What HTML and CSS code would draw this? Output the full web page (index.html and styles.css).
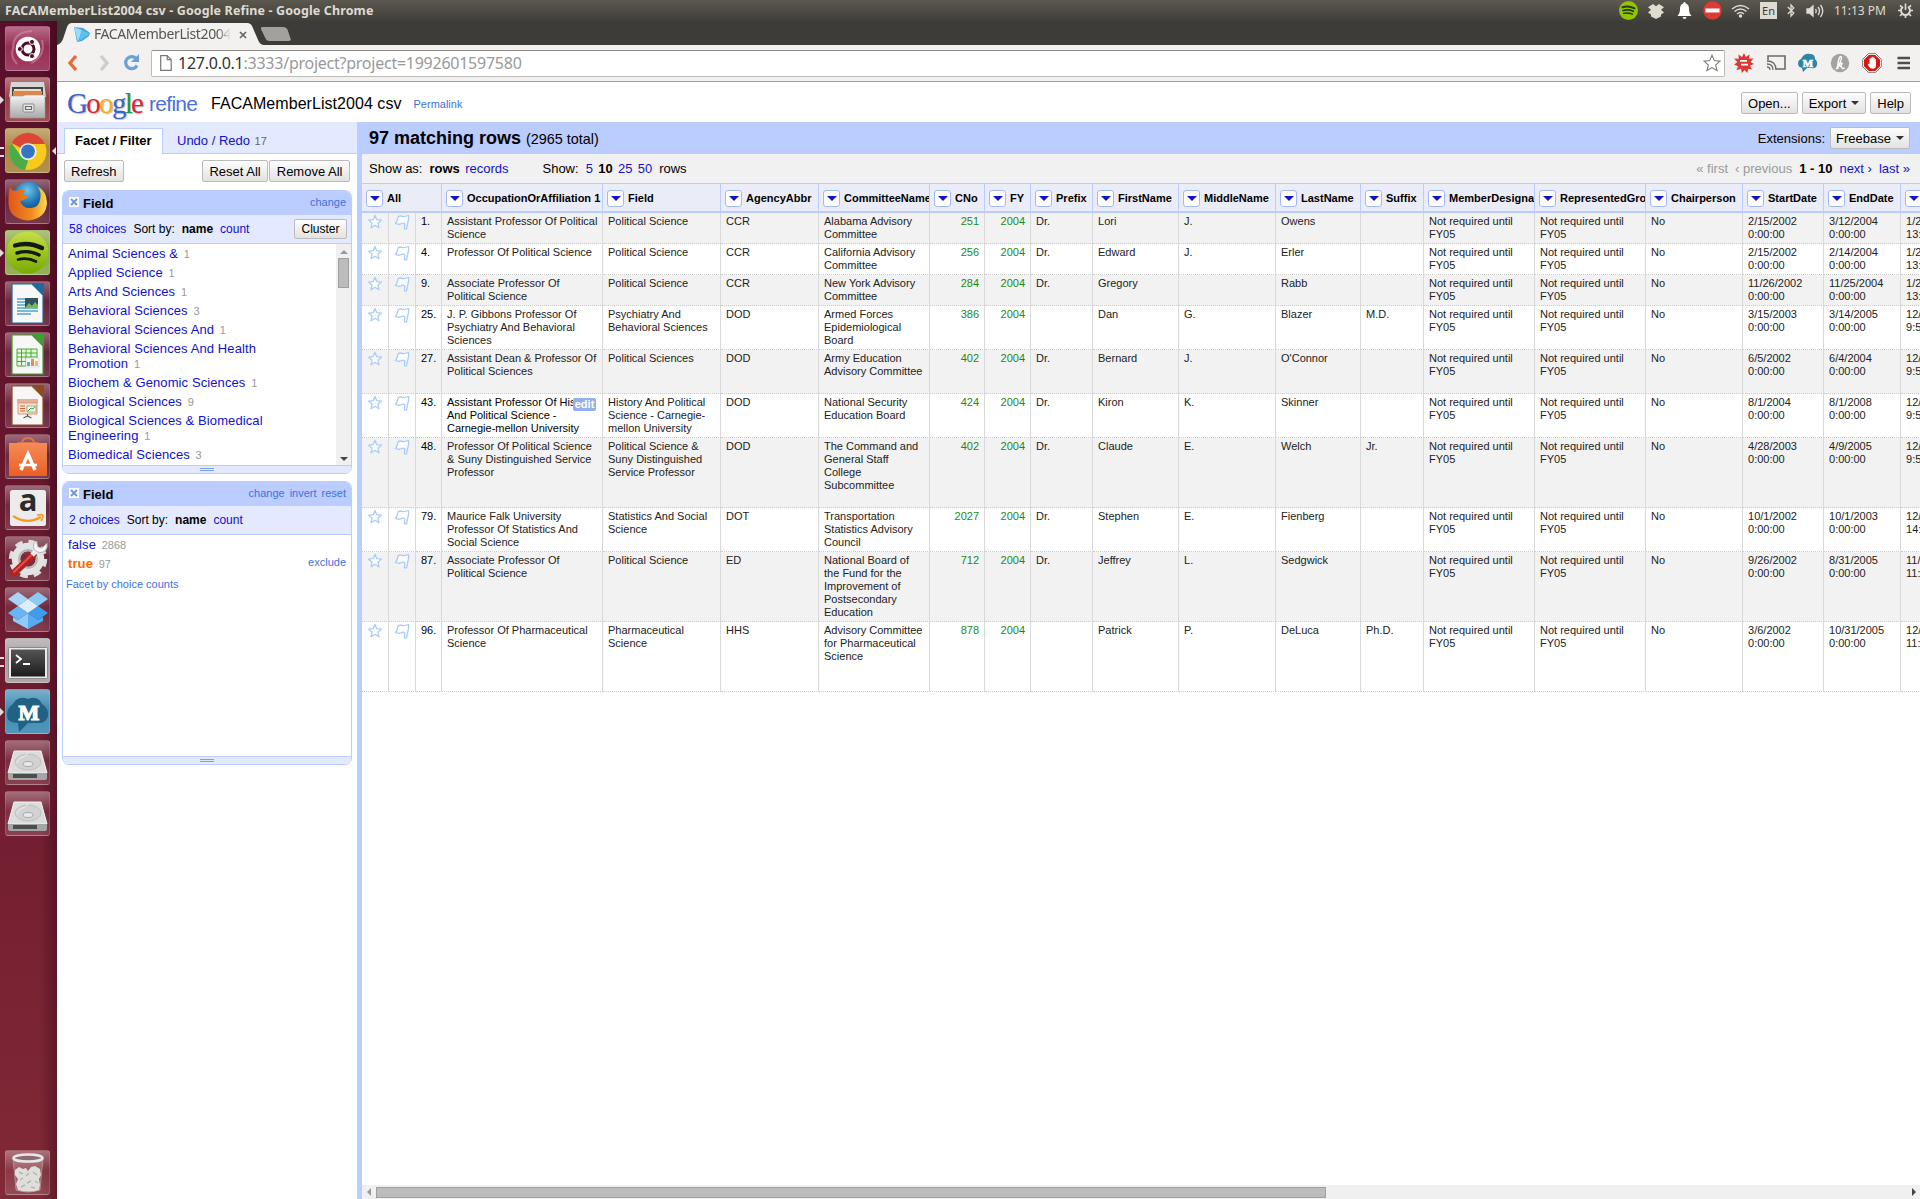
FILE: index.html
```html
<!DOCTYPE html>
<html lang="en">
<head>
<meta charset="utf-8">
<title>FACAMemberList2004 csv - Google Refine</title>
<link rel="stylesheet" href="styles.css">
</head>
<body>
<svg class="defs" width="0" height="0">
  <defs>
    <linearGradient id="gl" x1="0" y1="0" x2="0" y2="1"><stop offset="0" stop-color="#f4f4f4"/><stop offset="1" stop-color="#a9a9a9"/></linearGradient>
    <linearGradient id="dk" x1="0" y1="0" x2="0" y2="1"><stop offset="0" stop-color="#555"/><stop offset="1" stop-color="#1c1c1c"/></linearGradient>
    <linearGradient id="sp" x1="0" y1="0" x2="0" y2="1"><stop offset="0" stop-color="#c5de48"/><stop offset="1" stop-color="#76ab00"/></linearGradient>
    <linearGradient id="or" x1="0" y1="0" x2="0" y2="1"><stop offset="0" stop-color="#f58b56"/><stop offset="1" stop-color="#ea5f26"/></linearGradient>
    <radialGradient id="fb" cx=".45" cy=".25" r=".8"><stop offset="0" stop-color="#6cc8ee"/><stop offset=".5" stop-color="#1d6fae"/><stop offset="1" stop-color="#0b2a5c"/></radialGradient>
    <linearGradient id="fo" x1="0" y1="0" x2="1" y2="0"><stop offset="0" stop-color="#e0561c"/><stop offset=".6" stop-color="#f08a1e"/><stop offset="1" stop-color="#fbdc52"/></linearGradient>
  </defs>
  <symbol id="star" viewBox="0 0 16 16"><path d="M8 1.400l1.800 4.300 4.700.4-3.600 3.100 1.100 4.600L8 11.300l-4 2.500 1.100-4.600L1.500 6.100l4.700-.4z" fill="#fff" stroke="#a9ccfa" stroke-width="1.300" stroke-linejoin="round"/></symbol>
  <symbol id="flag" viewBox="0 0 16 16"><path d="M4 3Q6 1.500 8 2.300T14.500 1.500L14.700 4.500 12.500 14.800H10.500L10.800 9.800Q9 8.500 7 9.700T1.300 9.500L2.800 7.500z" fill="#fff" fill-opacity=".7" stroke="#a9ccfa" stroke-width="1.300" stroke-linejoin="round"/></symbol>
  <symbol id="doc" viewBox="0 0 45 45"><path d="M7 3h20l11 11v28H7z" fill="#f7f7f7" stroke="currentColor" stroke-width="1.200"/><path d="M27 2h12v12z" fill="currentColor"/></symbol>
  <symbol id="disk" viewBox="0 0 45 45"><path d="M9 11h27l6 22H3z" fill="#dcdcdc" stroke="#f2f2f2"/><ellipse cx="23" cy="22" rx="13" ry="8" fill="#d2d2d2" stroke="#c0c0c0"/><ellipse cx="23" cy="24" rx="5" ry="2.500" fill="#e8e8e8" stroke="#aaa"/><path d="M12 23c1-7 10-5 11-11" fill="none" stroke="#eee"/><path d="M3 33h39v5q0 2-2 2H5q-2 0-2-2z" fill="#a5a5a5"/><path d="M8 34h24v4H8z" fill="#4b4f4c"/></symbol>
</svg>

<div class="desktop">
  <header class="panel">
    <span class="panel-title">FACAMemberList2004 csv - Google Refine - Google Chrome</span>
    <div class="tray">
      <svg width="19" height="19" viewBox="0 0 19 19"><circle cx="9.500" cy="9.500" r="9.500" fill="#8ec400"/><g fill="none" stroke="#26380a" stroke-linecap="round"><path d="M3.500 6.300q6-1.800 12 1" stroke-width="2"/><path d="M4 9.500q5.500-1.500 10.300.8" stroke-width="1.700"/><path d="M4.600 12.400q4.500-1 8.700.8" stroke-width="1.400"/></g></svg>
      <svg class="g10" width="16" height="16" viewBox="0 0 16 16" fill="#dfdbd2"><path d="M5 1l3 2.300L11 1l5 3.200-3 2.600 3 2.700-3 1.900v2L8 16l-5-2.600v-2L0 9.500l3-2.700-3-2.600z"/></svg>
      <svg class="g13" width="15" height="17" viewBox="0 0 15 17" fill="#fff"><path d="M7.500 0q1.300 0 1.300 1.500 3.200 1 3.200 5 0 5 2.500 7.500H.5Q3 11.500 3 6.500q0-4 3.200-5Q6.200 0 7.500 0zM5.500 15h4q-.5 2-2 2t-2-2z"/></svg>
      <svg class="g11" width="19" height="19" viewBox="0 0 19 19"><circle cx="9.500" cy="9.500" r="9.200" fill="#dc3b35"/><path d="M2.500 7.500h14v4h-14z" fill="#fff"/></svg>
      <svg class="g9" width="19" height="14" viewBox="0 0 19 14" fill="none" stroke="#dfdbd2" stroke-width="1.500"><path d="M1 5q8.500-7 17 0M3.500 7.500q6-5 12 0M6 10q3.500-3 7 0"/><circle cx="9.500" cy="12" r="1" fill="#dfdbd2"/></svg>
      <span class="lang">En</span>
      <svg class="g10" width="8" height="15" viewBox="0 0 8 15" fill="none" stroke="#dfdbd2" stroke-width="1.300"><path d="M.8 4l6 6L4 13V2l2.800 3-6 6"/></svg>
      <svg class="g11" width="18" height="14" viewBox="0 0 18 14" fill="none" stroke="#dfdbd2" stroke-width="1.300"><path d="M1 5h2.500L7 2v10L3.500 9H1z" fill="#dfdbd2"/><path d="M9.500 5q1.500 2 0 4M12 3q3 4 0 8M14.500 1q4.500 6 0 12"/></svg>
      <span class="clock">11:13 PM</span>
      <svg class="g12" width="15" height="15" viewBox="0 0 15 15" fill="none" stroke="#dfdbd2"><path d="M5 3.800a4.500 4.500 0 1 0 5 0" stroke-width="2"/><path d="M7.500.500v6.500" stroke-width="1.600"/><path d="M0 7.500h2.500M12.500 7.500H15M7.500 12.500V15M2 13l2-2M13 13l-2-2M2 2.300l1.700 1.700M13 2.300L11.300 4" stroke-width="1.700"/></svg>
    </div>
  </header>

  <nav class="launcher">
    <div class="tile t-ubuntu"><svg viewBox="0 0 45 45"><path d="M8 22Q8 6 27 5M37 14q4 16-11 23M12 38q-8-8-3-18" fill="none" stroke="#d79ab0" stroke-width="2" opacity=".5"/><circle cx="23" cy="23" r="12.300" fill="#fff"/><circle cx="23" cy="23" r="6" fill="none" stroke="#4d0a28" stroke-width="3"/><g fill="#4d0a28" stroke="#fff" stroke-width="1"><circle cx="14.800" cy="23" r="2.500"/><circle cx="27" cy="15.900" r="2.500"/><circle cx="27" cy="30.100" r="2.500"/></g></svg></div>
    <div class="tile t-files run"><svg viewBox="0 0 45 45"><path d="M6 5h33l2 15H4z" fill="#d6d6d4"/><path d="M7 10h31v10H7z" fill="#484440"/><path d="M9 12h27v2H9z" fill="#e9dccb"/><path d="M8 14h29v6H8z" fill="#e58345"/><path d="M5 19h13l2-1h20v23H5z" fill="url(#gl)" stroke="#989898" stroke-width=".6"/><rect x="18" y="27" width="11" height="8" rx="1" fill="#e8e8e8" stroke="#8a8a8a"/><path d="M20.500 29.500h6v3h-6z" fill="none" stroke="#6a6a6a" stroke-width="1.200"/></svg></div>
    <div class="tile t-chrome run2 active"><svg viewBox="0 0 45 45"><circle cx="23" cy="23.500" r="18.500" fill="#f8ca1b"/><path d="M23 23.500L6.500 15a18.500 18.500 0 0 1 33.500 1H23z" fill="#dc4636"/><path d="M6.500 15L16 28l7 5-3 9A18.500 18.500 0 0 1 6.500 15z" fill="#4aac49"/><circle cx="23" cy="23.500" r="8.600" fill="#f1f1ee"/><circle cx="23" cy="23.500" r="6.900" fill="#3475c4"/></svg></div>
    <div class="tile"><svg viewBox="0 0 45 45"><circle cx="24" cy="20" r="17" fill="url(#fb)"/><path d="M5 8q2 4 6 4 5-3 10 0-4 1-3 4 5 0 4 3-5 3-7 3 3 8 11 7 8-1 9-8 2-8-3-14 10 5 10 17-1 16-19 17.500Q4 40 3.500 24 3.300 14 5 8z" fill="url(#fo)"/></svg></div>
    <div class="tile t-spotify run"><svg viewBox="0 0 45 45"><circle cx="22.500" cy="22.500" r="21" fill="url(#sp)"/><g fill="none" stroke="#15190b" stroke-linecap="round"><path d="M10 15.500q14-4 27 2.500" stroke-width="4.400"/><path d="M12 23q12-3.500 22 2" stroke-width="3.400"/><path d="M13 29.500q10-2.500 18 2" stroke-width="2.700"/></g></svg></div>
    <div class="tile c-writer"><svg viewBox="0 0 45 45"><use href="#doc"/><path d="M12 18h21M12 21h21M12 24h21M12 27h21M12 30h21M12 33h14" stroke="#4da5d0" stroke-width="1.500"/><path d="M20 17h13v10H20z" fill="#2f5362"/><path d="M20 27l4-5 3 3 3-4 3 3v3z" fill="#7db84e"/></svg></div>
    <div class="tile c-calc"><svg viewBox="0 0 45 45"><use href="#doc"/><path d="M12 17h20v17H12z" fill="#e9f7e1" stroke="#43b02a"/><path d="M12 21h20M12 25h20M12 29.500h20M16.500 17v17M21 17v17M26 17v17" stroke="#43b02a"/><path d="M21 26h13v9H21z" fill="#f5f5f5" stroke="#ccc" stroke-width=".5"/><path d="M22 30h3v4h-3z" fill="#5aa9dc"/><path d="M26 27h3v7h-3z" fill="#e98d45"/><path d="M30 29h3v5h-3z" fill="#f0b38a"/></svg></div>
    <div class="tile c-impress"><svg viewBox="0 0 45 45"><use href="#doc"/><path d="M12 17h21M12 19h21" stroke="#d06b3d" stroke-width="1.200"/><path d="M13 20h19v11H13z" fill="#fbe5da" stroke="#dd946f"/><path d="M15 23h5M15 25.500h5M15 28h5" stroke="#c85b2e"/><path d="M22 23h9v6h-9z" fill="#fff" stroke="#6aa84f" stroke-width=".8"/><path d="M23 28l3-3 2 1 2-2.500" fill="none" stroke="#3e9c35"/><path d="M22.500 31v2l-4 2M22.500 33l4 2" fill="none" stroke="#555" stroke-width="1.200"/></svg></div>
    <div class="tile"><svg viewBox="0 0 45 45"><path d="M17 10q0-6 6-6t6 6v3M13.500 13V9h19v4" fill="none" stroke="#d87550" stroke-width="2"/><path d="M4 9h38v33H4z" fill="url(#or)"/><path d="M16 36l7-16 7 16" fill="none" stroke="#fff" stroke-width="3.500"/><path d="M14 31h18" stroke="#fff" stroke-width="2.500"/></svg></div>
    <div class="tile"><svg viewBox="0 0 45 45"><rect x="5" y="5" width="36" height="36" rx="2.500" class="amz"/><text x="23" y="26" class="amz-a" text-anchor="middle">a</text><path d="M8 31q14 9 28 1" fill="none" stroke="#f79a1e" stroke-width="2.200"/><path d="M32 30.500q6-2 6 .5 0 3-2 5" fill="none" stroke="#f79a1e" stroke-width="1.700"/></svg></div>
    <div class="tile"><svg viewBox="0 0 45 45"><circle cx="23" cy="23" r="17" fill="none" stroke="#dedede" stroke-width="4.500" stroke-dasharray="7.500 5.850"/><circle cx="23" cy="23" r="12" fill="none" stroke="#e3e3e3" stroke-width="8.500"/><circle cx="23" cy="23" r="9" fill="none" stroke="#b4b4b4" stroke-width="2"/><path d="M9 37L28 19" stroke="#b51f1d" stroke-width="7" stroke-linecap="round"/><path d="M9 36L26 19.500" stroke="#e0504a" stroke-width="2" stroke-linecap="round"/><path d="M27 19l5-5" stroke="#ececec" stroke-width="5"/><path d="M32 5q-5 2-3 8 5 6 11 2 3-3 2-8l-5 5-4-1-1-4z" fill="#f4f4f4" stroke="#a8a8a8" stroke-width=".8"/></svg></div>
    <div class="tile"><svg viewBox="0 0 45 45"><path d="M13 5l10 7-10 7-10-7z" fill="#a5d5fa"/><path d="M33 5l10 7-10 7-10-7z" fill="#8cc8f8"/><path d="M3 26l10-7 10 7-10 7z" fill="#69b5f3"/><path d="M43 26l-10-7-10 7 10 7z" fill="#3d9ceb"/><path d="M13 19l10-7 10 7-10 7z" fill="#daf0ff"/><path d="M8 30l5 3 10-7v16L8 34z" fill="#8fcaf8"/><path d="M38 30l-5 3-10-7v16l15-8z" fill="#56aaf0"/></svg></div>
    <div class="tile t-term run2"><svg viewBox="0 0 45 45"><rect x="3.500" y="9.500" width="39" height="31" rx="1" fill="#e9e9e9" stroke="#8c8888"/><path d="M6 11.500h34v27H6z" fill="url(#dk)"/><path d="M11 17l5 4-5 4M18 26h7" fill="none" stroke="#fff" stroke-width="1.800"/></svg></div>
    <div class="tile t-menu run"><svg viewBox="0 0 45 45"><path d="M8 15q5-9 15-5 10-4 14 5 7 4 6 12-2 8-11 7H23l-9 9-1-9Q2 34 2 26q0-7 6-11z" fill="#216184"/><text x="24" y="31" class="m-letter" text-anchor="middle">M</text></svg></div>
    <div class="tile"><svg viewBox="0 0 45 45"><use href="#disk"/></svg></div>
    <div class="tile"><svg viewBox="0 0 45 45"><use href="#disk"/></svg></div>
    <div class="tile trash"><svg viewBox="0 0 45 45"><path d="M8 8h30l-3 32q-12 4-24 0z" fill="#fff" fill-opacity=".18" stroke="#ddd" stroke-opacity=".4"/><path d="M10 20l4-3 4 2 3-1 2 3 3-4 4-1 5 3 1 6-2 4 1 6-1 5q-10 3-21 0l-2-6 2-5-3-4z" fill="#dededb"/><path d="M14 22l4 2M21 26l3-3M28 22l4 3M15 30l3-2M22 33l4-2M30 31l3 2M16 37l4-2M26 37l4 1" fill="none" stroke="#b5b5b1" stroke-width="1.500"/><ellipse cx="23" cy="8" rx="14.500" ry="3.600" fill="#8e6b72" stroke="#e6e8e5" stroke-width="2.500"/></svg></div>
  </nav>

  <main class="browser">
    <div class="tabstrip">
      <svg class="tab-shape" width="300" height="24" viewBox="0 0 300 24"><path d="M0 24Q4 23 6 18L10 6q1.500-4 5-4h175q4 0 5.500 4l6 14q2 4 5.500 4z" fill="#f2f1f0"/><path d="M204 8q-.6-2 1.500-2h21q3 0 4 2.500l3 9q1 2.500-2 2.500h-19q-3 0-4-2.500z" fill="#a3a19d"/><path d="M17 6l9 1 7 5-1 3-7 5-5 1z" fill="#3ba4dd"/><path d="M17 6l8 3-4 12z" fill="#9adcf6"/><path d="M25 9l8 4-11 7z" fill="#62c0ec"/></svg>
      <span class="tab-title">FACAMemberList2004</span>
      <svg class="tab-close" width="8" height="8" viewBox="0 0 8 8"><path d="M1 1l6 6M7 1L1 7" stroke="#666" stroke-width="1.700"/></svg>
    </div>

    <div class="toolbar">
      <svg class="nav-icons" width="94" height="36" viewBox="0 0 94 36" fill="none"><path d="M19 11l-6 7 6 7" stroke="#e2703a" stroke-width="3.400"/><path d="M44 11l6 7-6 7" stroke="#cfcdc9" stroke-width="3.400"/><path d="M79 13.500a6 6 0 1 0 1 7" stroke="#6ba1d8" stroke-width="3.200"/><path d="M82 9v8h-8z" fill="#6ba1d8"/></svg>
      <div class="url">
        <svg width="12" height="16" viewBox="0 0 12 16"><path d="M.700.700h6.500l4 4v10.600H.700zM7.200.700v4h4" fill="#fff" stroke="#777" stroke-width="1.200"/></svg>
        <span class="url-text"><b>127.0.0.1</b>:3333/project?project=1992601597580</span>
        <svg width="18" height="18" viewBox="0 0 18 18"><path d="M9 1.200l2.300 5.400 5.800.5-4.400 3.800 1.300 5.700L9 13.600l-5 3 1.300-5.700L.900 7.100l5.800-.5z" fill="#fff" stroke="#777" stroke-width="1.100"/></svg>
      </div>
      <div class="exts">
        <svg width="20" height="20" viewBox="0 0 20 20"><path d="M10 0l1.800 4 3.700-2.500-.5 4.300 4.500-.3-3 3.500L20 11l-4 1.500 2 4-4-.7-.5 4.200L10.500 17 8 20l-1-4.300-4.500 1.500 1.500-4L0 11.500 3.500 9 0 5.500l4.800.3L4.500 1.500 8 4z" fill="#dd3733"/><path d="M6 7h7v1.800H6zM7 10.800h7v1.800H7z" fill="#fff"/></svg>
        <svg width="20" height="20" viewBox="0 0 20 20" fill="none" stroke="#6c6a68" stroke-width="1.600"><path d="M2 7V3h17v13h-9"/><path d="M1 14q3 0 3 3M1 11q6 0 6 6M1 8q9 0 9 9" stroke-width="1.300"/></svg>
        <svg width="20" height="20" viewBox="0 0 20 20"><path d="M3 6q3-6 9-5 5 0 5 5 3 3 2 6-1 4-6 3H9l-4 4-1-4q-4-1-4-4.500T3 6z" fill="#2d86a5"/><text x="10" y="14" class="ext-m" text-anchor="middle">M</text></svg>
        <svg width="20" height="20" viewBox="0 0 20 20"><circle cx="10" cy="10" r="9.200" fill="#a3a3a3"/><path d="M6 16Q11 9 11.500 5q0-2-1.200-1.500Q8 6 7.500 16 9.500 10 11.500 10q1.800.5-1.500 3 1.500 0 2 2 .5 1.500 2.500-.5" fill="none" stroke="#fff" stroke-width="1.300"/></svg>
        <svg width="20" height="20" viewBox="0 0 20 20"><path d="M6.300.700h7.400l5.600 5.600v7.400l-5.600 5.600H6.300L.700 13.700V6.300z" fill="#fff" stroke="#777"/><path d="M6.800 2h6.400L18 6.800v6.400L13.200 18H6.800L2 13.200V6.800z" fill="#d9130f"/><path d="M5.500 10.500l2 .8V5.500h1.300v-1h1.300v-.7h1.400v1h1.300v1.500h1.200v6q0 3.500-3.500 3.500-2.500 0-3.500-2z" fill="#fff"/></svg>
        <svg width="14" height="14" viewBox="0 0 14 14"><path d="M.5 2h12.500M.5 7h12.500M.5 12h12.500" stroke="#4f4e4c" stroke-width="2.600"/></svg>
      </div>
    </div>

    <div class="app-head">
      <div class="logo"><span class="google"><i class="b">G</i><i class="r">o</i><i class="y">o</i><i class="b">g</i><i class="g">l</i><i class="r">e</i></span><span class="refine">refine</span></div>
      <span class="project">FACAMemberList2004 csv</span>
      <a class="permalink">Permalink</a>
      <div class="head-buttons"><span class="button">Open...</span><span class="button drop">Export</span><span class="button">Help</span></div>
    </div>

    <div class="app">
      <aside class="left">
        <div class="tabs"><span class="tab on">Facet / Filter</span><span class="tab">Undo / Redo <small>17</small></span></div>
        <div class="facet-tools"><span class="button">Refresh</span><span class="pair"><span class="button">Reset All</span><span class="button">Remove All</span></span></div>

        <section class="facet">
          <div class="facet-head"><svg width="10" height="10" viewBox="0 0 10 10"><path d="M0 0h10v10H0z" fill="#fff"/><path d="M2 2l6 6M8 2L2 8" stroke="#6d95e0" stroke-width="2"/></svg><b>Field</b><span class="acts"><a>change</a></span></div>
          <div class="facet-sub"><a>58 choices</a><span>Sort by:</span><b>name</b><a>count</a><span class="button small">Cluster</span></div>
          <div class="facet-body">
            <div class="choices">
              <div>Animal Sciences &amp; <small>1</small></div>
              <div>Applied Science <small>1</small></div>
              <div>Arts And Sciences <small>1</small></div>
              <div>Behavioral Sciences <small>3</small></div>
              <div>Behavioral Sciences And <small>1</small></div>
              <div>Behavioral Sciences And Health<br>Promotion <small>1</small></div>
              <div>Biochem &amp; Genomic Sciences <small>1</small></div>
              <div>Biological Sciences <small>9</small></div>
              <div>Biological Sciences &amp; Biomedical<br>Engineering <small>1</small></div>
              <div>Biomedical Sciences <small>3</small></div>
            </div>
            <div class="vbar"><i class="up"></i><i class="thumb"></i><i class="down"></i></div>
          </div>
          <div class="grip"><i></i></div>
        </section>

        <section class="facet">
          <div class="facet-head"><svg width="10" height="10" viewBox="0 0 10 10"><path d="M0 0h10v10H0z" fill="#fff"/><path d="M2 2l6 6M8 2L2 8" stroke="#6d95e0" stroke-width="2"/></svg><b>Field</b><span class="acts"><a>change</a><a>invert</a><a>reset</a></span></div>
          <div class="facet-sub"><a>2 choices</a><span>Sort by:</span><b>name</b><a>count</a></div>
          <div class="facet-body">
            <div class="choices">
              <div>false <small>2868</small></div>
              <div class="sel"><span><b>true</b> <small>97</small></span><a>exclude</a></div>
              <a class="by-count">Facet by choice counts</a>
            </div>
          </div>
          <div class="grip"><i></i></div>
        </section>
      </aside>

      <section class="right">
        <div class="summary"><b>97 matching rows</b><span>(2965 total)</span><span class="ext-label">Extensions:</span><span class="button drop">Freebase</span></div>
        <div class="controls">
          <span>Show as:</span><b class="s7">rows</b><a class="s5">records</a>
          <span class="s34">Show:</span><a class="s7">5</a><b class="s5">10</b><a class="s5">25</a><a class="s5">50</a><span class="s7">rows</span>
          <div class="pager"><span>« first</span><span>‹ previous</span><b>1 - 10</b><a>next ›</a><a>last »</a></div>
        </div>
        <div class="grid">
          <table>
            <colgroup><col class="w27"><col class="w27"><col class="w26"><col class="w161"><col class="w118"><col class="w98"><col class="w111"><col class="w55"><col class="w46"><col class="w62"><col class="w86"><col class="w97"><col class="w85"><col class="w63"><col class="w111"><col class="w111"><col class="w97"><col class="w81"><col class="w77"><col class="w80"></colgroup>
            <thead><tr><th colspan="3"><div><i></i>All</div></th><th><div><i></i>OccupationOrAffiliation 1</div></th><th><div><i></i>Field</div></th><th><div><i></i>AgencyAbbr</div></th><th><div><i></i>CommitteeName</div></th><th><div><i></i>CNo</div></th><th><div><i></i>FY</div></th><th><div><i></i>Prefix</div></th><th><div><i></i>FirstName</div></th><th><div><i></i>MiddleName</div></th><th><div><i></i>LastName</div></th><th><div><i></i>Suffix</div></th><th><div><i></i>MemberDesigna</div></th><th><div><i></i>RepresentedGro</div></th><th><div><i></i>Chairperson</div></th><th><div><i></i>StartDate</div></th><th><div><i></i>EndDate</div></th><th><div><i></i></div></th></tr></thead>
            <tbody>
              <tr class="h31"><td><svg><use href="#star"/></svg></td><td><svg><use href="#flag"/></svg></td><td>1.</td><td>Assistant Professor Of Political<br>Science</td><td>Political Science</td><td>CCR</td><td>Alabama Advisory<br>Committee</td><td>251</td><td>2004</td><td>Dr.</td><td>Lori</td><td>J.</td><td>Owens</td><td></td><td>Not required until<br>FY05</td><td>Not required until<br>FY05</td><td>No</td><td>2/15/2002<br>0:00:00</td><td>3/12/2004<br>0:00:00</td><td>1/2<br>13:</td></tr>
              <tr class="h31"><td><svg><use href="#star"/></svg></td><td><svg><use href="#flag"/></svg></td><td>4.</td><td>Professor Of Political Science</td><td>Political Science</td><td>CCR</td><td>California Advisory<br>Committee</td><td>256</td><td>2004</td><td>Dr.</td><td>Edward</td><td>J.</td><td>Erler</td><td></td><td>Not required until<br>FY05</td><td>Not required until<br>FY05</td><td>No</td><td>2/15/2002<br>0:00:00</td><td>2/14/2004<br>0:00:00</td><td>1/2<br>13:</td></tr>
              <tr class="h31"><td><svg><use href="#star"/></svg></td><td><svg><use href="#flag"/></svg></td><td>9.</td><td>Associate Professor Of<br>Political Science</td><td>Political Science</td><td>CCR</td><td>New York Advisory<br>Committee</td><td>284</td><td>2004</td><td>Dr.</td><td>Gregory</td><td></td><td>Rabb</td><td></td><td>Not required until<br>FY05</td><td>Not required until<br>FY05</td><td>No</td><td>11/26/2002<br>0:00:00</td><td>11/25/2004<br>0:00:00</td><td>1/2<br>13:</td></tr>
              <tr class="h44"><td><svg><use href="#star"/></svg></td><td><svg><use href="#flag"/></svg></td><td>25.</td><td>J. P. Gibbons Professor Of<br>Psychiatry And Behavioral<br>Sciences</td><td>Psychiatry And<br>Behavioral Sciences</td><td>DOD</td><td>Armed Forces<br>Epidemiological<br>Board</td><td>386</td><td>2004</td><td></td><td>Dan</td><td>G.</td><td>Blazer</td><td>M.D.</td><td>Not required until<br>FY05</td><td>Not required until<br>FY05</td><td>No</td><td>3/15/2003<br>0:00:00</td><td>3/14/2005<br>0:00:00</td><td>12/<br>9:5</td></tr>
              <tr class="h44"><td><svg><use href="#star"/></svg></td><td><svg><use href="#flag"/></svg></td><td>27.</td><td>Assistant Dean &amp; Professor Of<br>Political Sciences</td><td>Political Sciences</td><td>DOD</td><td>Army Education<br>Advisory Committee</td><td>402</td><td>2004</td><td>Dr.</td><td>Bernard</td><td>J.</td><td>O'Connor</td><td></td><td>Not required until<br>FY05</td><td>Not required until<br>FY05</td><td>No</td><td>6/5/2002<br>0:00:00</td><td>6/4/2004<br>0:00:00</td><td>12/<br>9:5</td></tr>
              <tr class="h44"><td><svg><use href="#star"/></svg></td><td><svg><use href="#flag"/></svg></td><td>43.</td><td class="hover">Assistant Professor Of His<br>And Political Science -<br>Carnegie-mellon University<span class="edit">edit</span></td><td>History And Political<br>Science - Carnegie-<br>mellon University</td><td>DOD</td><td>National Security<br>Education Board</td><td>424</td><td>2004</td><td>Dr.</td><td>Kiron</td><td>K.</td><td>Skinner</td><td></td><td>Not required until<br>FY05</td><td>Not required until<br>FY05</td><td>No</td><td>8/1/2004<br>0:00:00</td><td>8/1/2008<br>0:00:00</td><td>12/<br>9:5</td></tr>
              <tr class="h70"><td><svg><use href="#star"/></svg></td><td><svg><use href="#flag"/></svg></td><td>48.</td><td>Professor Of Political Science<br>&amp; Suny Distinguished Service<br>Professor</td><td>Political Science &amp;<br>Suny Distinguished<br>Service Professor</td><td>DOD</td><td>The Command and<br>General Staff<br>College<br>Subcommittee</td><td>402</td><td>2004</td><td>Dr.</td><td>Claude</td><td>E.</td><td>Welch</td><td>Jr.</td><td>Not required until<br>FY05</td><td>Not required until<br>FY05</td><td>No</td><td>4/28/2003<br>0:00:00</td><td>4/9/2005<br>0:00:00</td><td>12/<br>9:5</td></tr>
              <tr class="h44"><td><svg><use href="#star"/></svg></td><td><svg><use href="#flag"/></svg></td><td>79.</td><td>Maurice Falk University<br>Professor Of Statistics And<br>Social Science</td><td>Statistics And Social<br>Science</td><td>DOT</td><td>Transportation<br>Statistics Advisory<br>Council</td><td>2027</td><td>2004</td><td>Dr.</td><td>Stephen</td><td>E.</td><td>Fienberg</td><td></td><td>Not required until<br>FY05</td><td>Not required until<br>FY05</td><td>No</td><td>10/1/2002<br>0:00:00</td><td>10/1/2003<br>0:00:00</td><td>12/<br>14:</td></tr>
              <tr class="h70"><td><svg><use href="#star"/></svg></td><td><svg><use href="#flag"/></svg></td><td>87.</td><td>Associate Professor Of<br>Political Science</td><td>Political Science</td><td>ED</td><td>National Board of<br>the Fund for the<br>Improvement of<br>Postsecondary<br>Education</td><td>712</td><td>2004</td><td>Dr.</td><td>Jeffrey</td><td>L.</td><td>Sedgwick</td><td></td><td>Not required until<br>FY05</td><td>Not required until<br>FY05</td><td>No</td><td>9/26/2002<br>0:00:00</td><td>8/31/2005<br>0:00:00</td><td>11/<br>11:</td></tr>
              <tr class="h70"><td><svg><use href="#star"/></svg></td><td><svg><use href="#flag"/></svg></td><td>96.</td><td>Professor Of Pharmaceutical<br>Science</td><td>Pharmaceutical<br>Science</td><td>HHS</td><td>Advisory Committee<br>for Pharmaceutical<br>Science</td><td>878</td><td>2004</td><td></td><td>Patrick</td><td>P.</td><td>DeLuca</td><td>Ph.D.</td><td>Not required until<br>FY05</td><td>Not required until<br>FY05</td><td>No</td><td>3/6/2002<br>0:00:00</td><td>10/31/2005<br>0:00:00</td><td>12/<br>11:</td></tr>
            </tbody>
          </table>
        </div>
        <div class="hbar"><i class="lt"></i><i class="thumb"></i><i class="rt"></i></div>
      </section>
    </div>
  </main>
</div>
</body>
</html>
```
FILE: styles.css
```css
* { box-sizing: border-box; }
html, body { margin: 0; height: 100%; overflow: hidden; }
body { font: 13px/15px "Liberation Sans", Arial, sans-serif; color: #000; background: #fff; }
svg { display: block; flex: none; }
i { font-style: normal; }
a { color: #11c; }
.defs { position: absolute; }

.desktop { display: grid; width: 1920px; height: 1199px; grid-template: 21px 1fr / 57px 1fr; }

/* top panel */
.panel { grid-column: 1 / 3; display: flex; align-items: center; justify-content: space-between; padding: 0 7px 0 5px; background: linear-gradient(#5b584e, #403e39); color: #dfdbd2; font-family: "Noto Sans", sans-serif; }
.panel-title { font-size: 12.500px; font-weight: 700; letter-spacing: .12px; white-space: nowrap; }
.tray { display: flex; align-items: center; }
.g9 { margin-left: 9px; } .g10 { margin-left: 10px; } .g11 { margin-left: 11px; } .g12 { margin-left: 12px; } .g13 { margin-left: 13px; }
.lang { width: 17px; height: 17px; margin-left: 10px; background: #dfdbd2; color: #3c3b37; font-size: 11px; line-height: 17px; text-align: center; }
.clock { width: 52px; margin-left: 10px; font-size: 12px; white-space: nowrap; }

/* launcher */
.launcher { display: flex; flex-direction: column; gap: 6px; padding: 5px 0 4px 5px; background: linear-gradient(90deg, rgba(40, 0, 15, 0) 70%, rgba(40, 0, 15, .35)), linear-gradient(#57102a, #6d1a2f 55%, #812936); }
.tile { position: relative; width: 45px; height: 45px; flex: none; border-radius: 3px; border: 1px solid rgba(255, 255, 255, .14); background: linear-gradient(rgba(255, 255, 255, .36), rgba(255, 255, 255, .08) 45%, rgba(255, 255, 255, .16)); }
.tile > svg { width: 45px; height: 45px; margin: -1px; }
.t-ubuntu { background-color: #8e1b46; }
.t-files { background-color: #8c2d36; }
.t-chrome { background-color: #a37c30; }
.t-spotify { background-color: #83a03a; }
.t-term { background-color: #a09698; }
.t-menu { background-color: #2f83ac; }
.c-writer { color: #1d6a9c; } .c-calc { color: #3aa32c; } .c-impress { color: #8f4a22; }
.amz { fill: #ececec; }
.amz-a { font: 700 31px "Open Sans", sans-serif; fill: #2c2c2c; }
.m-letter { font: 700 22px "Liberation Serif", serif; fill: #fff; stroke: #fff; stroke-width: 1.200px; }
.ext-m { font: 700 11px "Liberation Serif", serif; fill: #fff; stroke: #fff; stroke-width: .6px; }
.trash { margin-top: auto; }
.run::before { content: ""; position: absolute; left: -6px; top: 18px; border: 4px solid transparent; border-left-color: #ddd; border-right: 0; }
.run2::before { content: ""; position: absolute; left: -6px; top: 18px; width: 4px; height: 6px; border-top: 2px solid #ddd; border-bottom: 2px solid #ddd; }
.active::after { content: ""; position: absolute; right: -7px; top: 18px; border: 4px solid transparent; border-right-color: #ddd; border-left: 0; }

/* browser frame */
.browser { display: flex; flex-direction: column; min-width: 0; min-height: 0; }
.tabstrip { position: relative; display: flex; align-items: center; height: 24px; flex: none; background: #3d3c38; }
.tab-shape { position: absolute; left: 0; top: 0; }
.tab-title { position: relative; width: 137px; margin: 1px 0 0 37px; overflow: hidden; white-space: nowrap; font: 14px/20px "Noto Sans", sans-serif; letter-spacing: -.4px; color: #555; -webkit-mask-image: linear-gradient(90deg, #000 90%, transparent); mask-image: linear-gradient(90deg, #000 90%, transparent); }
.tab-close { position: relative; margin: 3px 0 0 8px; }
.toolbar { display: flex; align-items: center; height: 37px; flex: none; background: #f2f1f0; border-bottom: 1px solid #a3a19f; }
.url { display: flex; align-items: center; width: 1574px; height: 27px; padding: 0 3px 0 8px; border: 1px solid #bdbbb8; border-top-color: #8f8d8a; border-radius: 2px; background: #fff; }
.url-text { flex: 1; margin-left: 6px; font: 16px/24px "Noto Sans", sans-serif; letter-spacing: -.25px; color: #999; white-space: nowrap; }
.url-text b { font-weight: 400; color: #333; }
.exts { display: flex; align-items: center; gap: 12px; margin-left: 9px; }
.exts svg:last-child { margin-left: 3px; }

/* project header */
.app-head { display: flex; align-items: center; height: 40px; flex: none; padding: 2px 9px 0 10px; white-space: nowrap; }
.logo { display: flex; align-items: baseline; width: 144px; height: 38px; line-height: 38px; color: #4b6fdb; }
.google { width: 82px; font-family: "Liberation Serif", serif; font-size: 29px; letter-spacing: -1.700px; text-shadow: 1px 1px 1px #bbb; }
.google .b { color: #3b63d0; } .google .r { color: #d8243a; } .google .y { color: #f0b01a; } .google .g { color: #1c9c3e; }
.refine { font-size: 21px; letter-spacing: -.7px; transform: translateY(-2px); }
.project { font-size: 16px; letter-spacing: .05px; }
.permalink { margin: 3px 0 0 12px; font-size: 11px; color: #4272db; }
.head-buttons { display: flex; gap: 4px; margin-left: auto; }
.button { display: inline-flex; align-items: center; justify-content: center; height: 22px; padding: 0 6px; border: 1px solid #bbb; border-radius: 2px; background: linear-gradient(#fdfdfd, #e2e2e2); color: #000; white-space: nowrap; }
.drop::after { content: ""; margin-left: 5px; border: 4px solid transparent; border-top-color: #333; border-bottom: 0; }
.small { height: 20px; font-size: 12px; }

/* app body */
.app { display: grid; grid-template-columns: 300px 1fr; flex: 1; min-height: 0; }
.left { display: flex; flex-direction: column; min-width: 0; }
.tabs { display: flex; align-items: flex-end; height: 32px; flex: none; padding-left: 7px; background: #e3e9ff; box-shadow: inset 0 -1px #bcf; }
.tab { height: 26px; padding: 5px 14px 0; color: #11c; }
.tab small { margin-left: 1px; font-size: 11px; line-height: 1; color: #666; }
.tab.on { width: 99px; padding: 4px 0 0 10px; border: 1px solid #bcf; border-bottom: 0; background: #fff; color: #000; font-weight: 700; }
.facet-tools { display: flex; justify-content: space-between; padding: 6px 7px 8px; }
.pair { display: flex; gap: 1px; }
.pair .button { padding: 0 6.500px; }
.facet { display: flex; flex-direction: column; height: 284px; flex: none; margin: 0 5px 7px; border: 1px solid #bcf; border-radius: 7px; overflow: hidden; }
.facet-head { display: flex; align-items: center; height: 24px; flex: none; padding: 0 5px 0 6px; background: #bcf; }
.facet-head b { margin: 0 0 0 4px; }
.facet-head svg { margin-top: -2px; }
.acts { display: flex; gap: 5px; margin: 0 0 1px auto; font-size: 11px; }
.acts a { color: #4272db; }
.facet-sub { display: flex; align-items: center; height: 29px; flex: none; padding: 0 4px 0 6px; gap: 7px; background: #e3e9ff; border-bottom: 1px solid #bcf; font-size: 12px; }
.facet-sub .small { width: 53px; margin-left: auto; }
.facet-body { display: flex; height: 221px; flex: none; overflow: hidden; }
.choices { flex: 1; padding: 0 5px; color: #11c; letter-spacing: .1px; white-space: nowrap; }
.choices div { padding: 2px 0; }
.choices small { margin-left: 2px; font-size: 11px; line-height: 1; letter-spacing: 0; color: #999; }
.sel { display: flex; justify-content: space-between; }
.sel b { color: #f60; }
.sel a, .by-count { font-size: 11px; letter-spacing: 0; color: #4272db; }
.sel a { margin-top: -1px; }
.by-count { display: block; margin: 4px 0 0 -2px; }
.vbar { display: flex; flex-direction: column; align-items: center; width: 15px; padding: 6px 0 4px; background: #f0f0f0; }
.up { border: 4px solid transparent; border-bottom-color: #999; border-top: 0; }
.vbar .thumb { width: 11px; height: 30px; margin-top: 4px; background: #bcbcbc; border: 1px solid #a0a0a0; }
.down { margin-top: auto; border: 4px solid transparent; border-top-color: #444; border-bottom: 0; }
.grip { display: flex; justify-content: center; flex: 1; padding-top: 2px; border-top: 1px solid #bcf; background: #e3e9ff; }
.grip i { width: 14px; height: 3px; border: 1px solid #7da0ea; border-width: 1px 0; }

/* data view */
.right { display: flex; flex-direction: column; min-width: 0; min-height: 0; border-left: 5px solid #bcf; }
.summary { display: flex; align-items: center; height: 32px; flex: none; padding: 0 10px 0 7px; background: #bcf; white-space: nowrap; }
.summary b { font-size: 18px; }
.summary b + span { margin: 2px 0 0 5px; font-size: 14.400px; }
.summary .button { width: 80px; }
.ext-label { margin: 0 5px 0 auto; }
.controls { display: flex; align-items: center; height: 29px; flex: none; padding: 0 10px 0 7px; background: #f1f1f1; white-space: nowrap; }
.s5 { margin-left: 5.300px; } .s7 { margin-left: 7px; } .s34 { margin-left: 34px; }
.pager { display: flex; gap: 7px; margin-left: auto; }
.pager span { color: #999; }
.grid { flex: 1; min-height: 0; overflow: hidden; }
table { width: 1619px; table-layout: fixed; border-collapse: separate; border-spacing: 0; font-size: 11px; line-height: 13px; color: #222; }
.w26 { width: 26px; } .w27 { width: 27px; } .w46 { width: 46px; } .w55 { width: 55px; } .w62 { width: 62px; } .w63 { width: 63px; } .w77 { width: 77px; } .w80 { width: 80px; } .w81 { width: 81px; } .w85 { width: 85px; } .w86 { width: 86px; } .w97 { width: 97px; } .w98 { width: 98px; } .w111 { width: 111px; } .w118 { width: 118px; } .w161 { width: 161px; }
th { height: 30px; padding: 0; border: solid #bcf; border-width: 1px 1px 2px 0; background: #eaecf8; color: #000; overflow: hidden; }
th div { display: flex; align-items: center; height: 27px; padding: 2px 0 0 4px; overflow: hidden; white-space: nowrap; }
th i { display: flex; align-items: center; justify-content: center; width: 17px; height: 17px; flex: none; margin-right: 4px; border: 1px solid #a3b8f5; border-radius: 3px; background: #fff; }
th i::before { content: ""; border: 5px solid transparent; border-top-color: #11c; border-bottom: 0; }
td { padding: 2px 5px 0; vertical-align: top; border-right: 1px solid #d9d9d9; border-bottom: 1px dotted #ccc; white-space: nowrap; overflow: hidden; }
tr.h31 td { height: 31px; } tr.h44 td { height: 44px; } tr.h70 td { height: 70px; }
tbody tr:nth-child(odd) { background: #f2f2f2; }
td svg { width: 16px; height: 16px; margin-top: -1px; }
td:nth-child(3) { color: #000; }
td:nth-child(8), td:nth-child(9) { text-align: right; color: #1b8a1b; }
.hover { position: relative; color: #000; }
.edit { position: absolute; right: 6px; top: 4px; height: 13px; width: 23px; border-radius: 2px; background: #97aeec; color: #fff; font-weight: 700; text-align: center; }
.hbar { display: flex; align-items: center; height: 14px; flex: none; padding: 0 4px 0 5px; background: #f0f0f0; }
.hbar .thumb { width: 950px; height: 11px; margin-left: 5px; background: #bcbcbc; border: 1px solid #a0a0a0; }
.lt { border: 4px solid transparent; border-right-color: #999; border-left: 0; }
.rt { margin-left: auto; border: 4px solid transparent; border-left-color: #444; border-right: 0; }
```
